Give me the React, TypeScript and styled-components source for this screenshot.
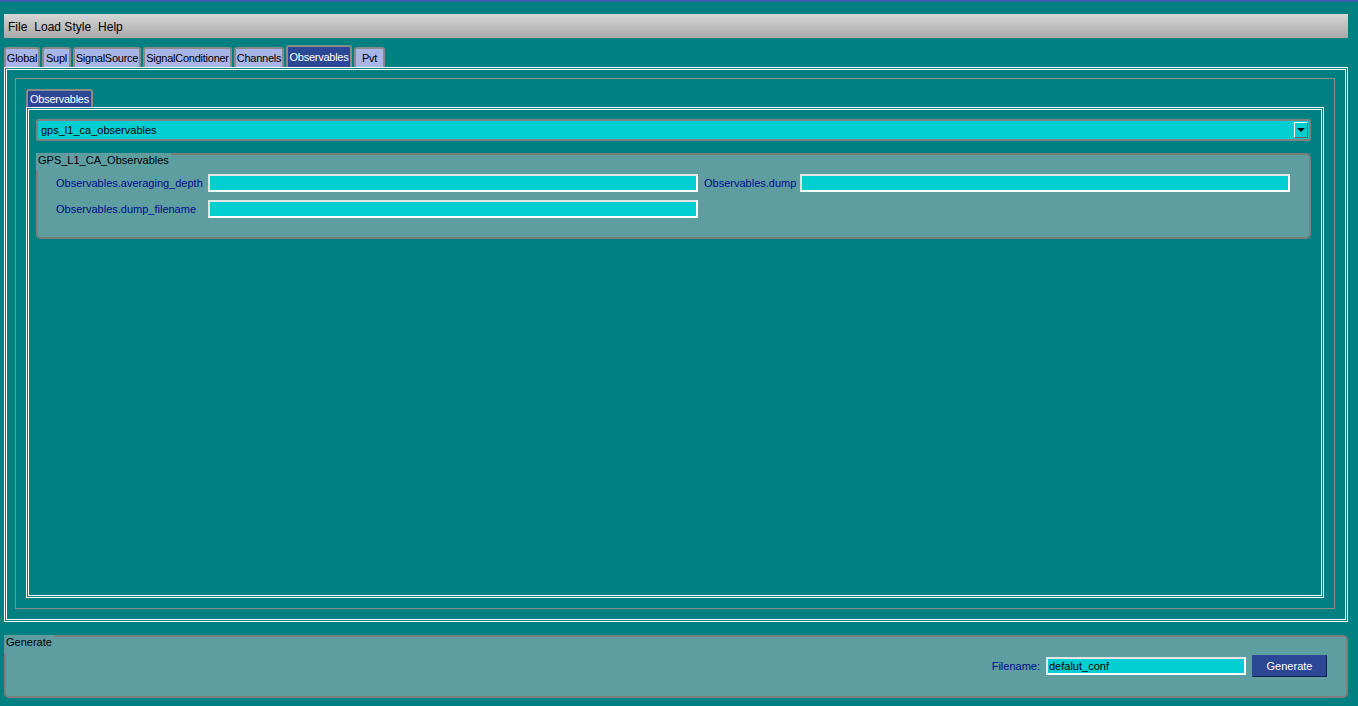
import React from "react";
import styled, { createGlobalStyle } from "styled-components";

const Global = createGlobalStyle`
  html, body { margin: 0; padding: 0; background: #008080; }
  body { font-family: "Liberation Sans", Arial, sans-serif; font-size: 11px; }
  * { box-sizing: border-box; }
`;

const Window = styled.div`
  width: 1358px;
  height: 706px;
  overflow: hidden;
  background: #008080;
  border-top: 2px solid #3a5fb0;
  padding: 12px 10px 0 4px;
  display: flex;
  flex-direction: column;
`;

const MenuBar = styled.div`
  height: 24px;
  background: linear-gradient(#d6d6d6, #a9a9a9);
  display: flex;
  align-items: center;
  padding-left: 4px;
  padding-top: 1px;
  gap: 7px;
  font-size: 12px;
  color: #000;
`;

const MenuItem = styled.span``;

const TabBar = styled.div<{ $small?: boolean }>`
  display: flex;
  align-items: flex-end;
  gap: 2px;
  height: ${(p) => (p.$small ? "18px" : "22px")};
  margin-top: ${(p) => (p.$small ? "0" : "7px")};
  position: relative;
  z-index: 1;
`;

const Tab = styled.div<{ $active?: boolean; $small?: boolean; $w: number }>`
  width: ${(p) => p.$w}px;
  height: ${(p) => (p.$active ? (p.$small ? "18px" : "22px") : "20px")};
  padding: 0;
  display: flex;
  align-items: center;
  justify-content: center;
  background: ${(p) => (p.$active ? "#2b4795" : "#a9b5e7")};
  color: ${(p) => (p.$active ? "#fff" : "#000")};
  border: 2px solid #8a8a8a;
  border-bottom: none;
  border-radius: 3px 3px 0 0;
  font-size: 11px;
  letter-spacing: -0.25px;
  white-space: nowrap;
`;

const Pane = styled.div`
  height: 555px;
  border: 3px double #fff;
  padding: 8px 10px 10px 8px;
  display: flex;
`;

const OuterFrame = styled.div`
  flex: 1;
  border: 1px solid #8c8c8c;
  padding: 10px;
  display: flex;
  flex-direction: column;
`;

const InnerPane = styled.div`
  flex: 1;
  border: 3px double #fff;
  padding: 9px 10px 0 7px;
  display: flex;
  flex-direction: column;
  gap: 12px;
`;

const Combo = styled.div`
  height: 22px;
  background: #00ced1;
  border: 2px solid #808080;
  border-radius: 2px;
  display: flex;
  align-items: center;
  justify-content: space-between;
  padding-left: 3px;
  color: #000;
  font-size: 11px;
`;

const ComboButton = styled.div`
  width: 14px;
  height: 16px;
  margin-right: 1px;
  background: #00ced1;
  border-left: 1px solid #fff;
  border-top: 1px solid #fff;
  border-right: 1px solid #606060;
  border-bottom: 1px solid #606060;
  display: flex;
  align-items: center;
  justify-content: center;
`;

const Arrow = styled.div`
  width: 0;
  height: 0;
  border-left: 4px solid transparent;
  border-right: 4px solid transparent;
  border-top: 4px solid #000;
`;

const Group = styled.div<{ $h: number }>`
  position: relative;
  height: ${(p) => p.$h}px;
  background: #5f9ea0;
  border: 2px solid #7d7d7d;
  border-radius: 5px;
`;

const GroupTitle = styled.div`
  position: absolute;
  left: -2px;
  top: -2px;
  background: #5f9ea0;
  padding: 1px 2px 4px 2px;
  color: #000;
  font-size: 11px;
  line-height: 13px;
`;

const FieldGrid = styled.div`
  display: grid;
  grid-template-columns: 146px 490px 90px 490px;
  column-gap: 6px;
  row-gap: 8px;
  padding: 19px 0 0 18px;
  align-items: center;
`;

const Label = styled.span`
  color: #000c8c;
  font-size: 11px;
  white-space: nowrap;
`;

const TextInput = styled.div<{ $w?: number }>`
  height: 18px;
  ${(p) => (p.$w ? `width: ${p.$w}px;` : "")}
  background: #00ced1;
  border: 2px solid #fff;
  border-top-color: #e4e4e4;
  border-left-color: #e4e4e4;
  color: #000;
  font-size: 11px;
  display: flex;
  align-items: center;
  padding-left: 1px;
`;

const GenerateGroup = styled(Group)`
  margin-top: 13px;
`;

const GenerateRow = styled.div`
  position: absolute;
  right: 19px;
  top: 18px;
  display: flex;
  align-items: center;
`;

const Button = styled.div`
  width: 75px;
  height: 22px;
  margin-left: 6px;
  background: #2b4795;
  color: #fff;
  border: 1px solid #2b4795;
  border-right-color: #14224a;
  border-bottom-color: #14224a;
  display: flex;
  align-items: center;
  justify-content: center;
  font-size: 11px;
`;

const FileLabel = styled(Label)`
  margin-right: 6px;
`;

const tabs: [string, number][] = [
  ["Global", 36],
  ["Supl", 29],
  ["SignalSource", 68],
  ["SignalConditioner", 89],
  ["Channels", 50],
  ["Observables", 66],
  ["Pvt", 31],
];

export default function App() {
  return (
    <>
      <Global />
      <Window>
        <MenuBar>
          <MenuItem>File</MenuItem>
          <MenuItem>Load Style</MenuItem>
          <MenuItem>Help</MenuItem>
        </MenuBar>
        <TabBar>
          {tabs.map(([t, w]) => (
            <Tab key={t} $w={w} $active={t === "Observables"}>
              {t}
            </Tab>
          ))}
        </TabBar>
        <Pane>
          <OuterFrame>
            <TabBar $small>
              <Tab $active $small $w={67}>
                Observables
              </Tab>
            </TabBar>
            <InnerPane>
              <Combo>
                gps_l1_ca_observables
                <ComboButton>
                  <Arrow />
                </ComboButton>
              </Combo>
              <Group $h={86}>
                <GroupTitle>GPS_L1_CA_Observables</GroupTitle>
                <FieldGrid>
                  <Label>Observables.averaging_depth</Label>
                  <TextInput />
                  <Label>Observables.dump</Label>
                  <TextInput />
                  <Label>Observables.dump_filename</Label>
                  <TextInput />
                </FieldGrid>
              </Group>
            </InnerPane>
          </OuterFrame>
        </Pane>
        <GenerateGroup $h={63}>
          <GroupTitle>Generate</GroupTitle>
          <GenerateRow>
            <FileLabel>Filename:</FileLabel>
            <TextInput $w={200}>defalut_conf</TextInput>
            <Button>Generate</Button>
          </GenerateRow>
        </GenerateGroup>
      </Window>
    </>
  );
}
